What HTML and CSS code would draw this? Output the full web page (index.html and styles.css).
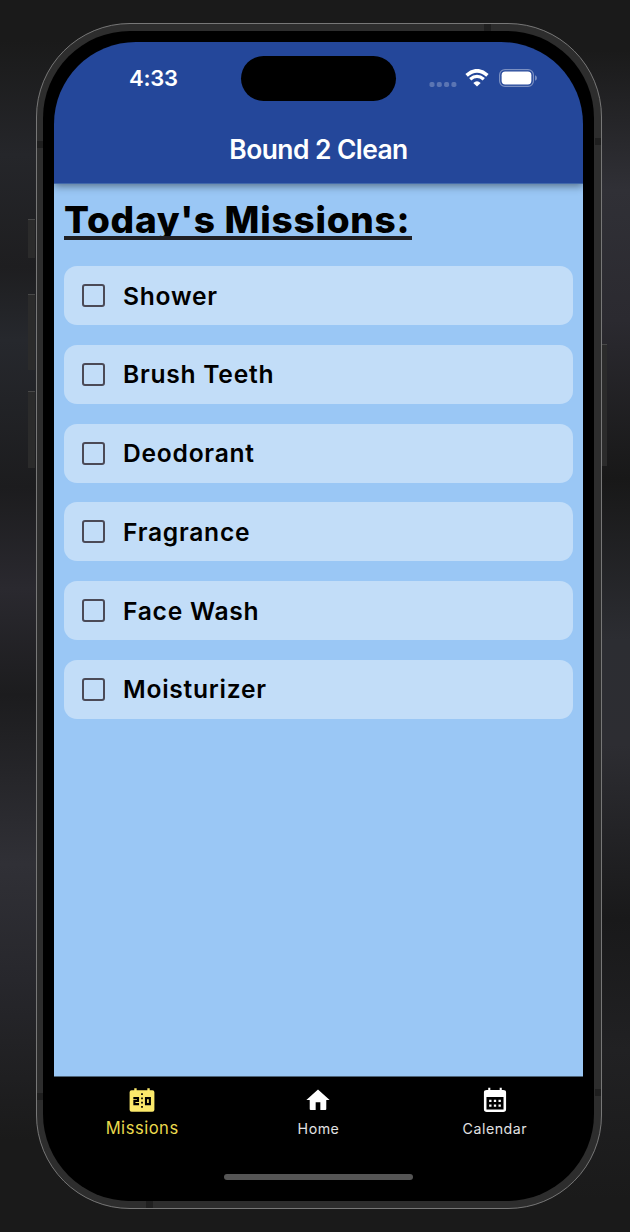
FILE: index.html
```html
<!DOCTYPE html>
<html lang="en">
<head>
  <meta charset="UTF-8">
  <title>Bound 2 Clean</title>
  <link rel="stylesheet" href="styles.css">
</head>
<body>
  <div class="phone">
    <!-- side buttons and antenna bands -->
    <span class="button action"></span>
    <span class="button vol-up"></span>
    <span class="button vol-down"></span>
    <span class="button power"></span>
    <span class="band band-top"></span>
    <span class="band band-bottom"></span>
    <span class="band band-left-top"></span>
    <span class="band band-right-top"></span>
    <span class="band band-left-bottom"></span>
    <span class="band band-right-bottom"></span>

    <div class="bezel">
      <div class="screen">
        <header class="app-bar">
          <div class="status-bar">
            <span class="time">4:33</span>
            <span class="island"></span>
            <div class="status-icons">
              <svg class="signal" width="28" height="6" viewBox="0 0 28 6" fill="#fff" fill-opacity=".25">
                <rect x=".5" y="1" width="5" height="5" rx="1.8"/>
                <rect x="7.8" y="1" width="5" height="5" rx="1.8"/>
                <rect x="15.1" y="1" width="5" height="5" rx="1.8"/>
                <rect x="22.4" y="1" width="5" height="5" rx="1.8"/>
              </svg>
              <svg class="wifi" width="24" height="18" viewBox="0 0 24 18" fill="none" stroke="#fff">
                <path d="M1.6 6.3Q12-2.7 22.4 6.3" stroke-width="3.7"/>
                <path d="M5.2 10.3Q12 4.4 18.8 10.3" stroke-width="3.3"/>
                <path d="M12 17.5L8.3 13.9Q12 10.8 15.7 13.9Z" fill="#fff" stroke="none"/>
              </svg>
              <svg class="battery" width="39" height="18" viewBox="0 0 39 18">
                <rect x=".6" y=".6" width="33.8" height="16.8" rx="5.4" fill="none" stroke="#fff" stroke-opacity=".4" stroke-width="1.2"/>
                <rect x="2.6" y="2.6" width="29.8" height="12.8" rx="3.6" fill="#fff"/>
                <path d="M36 6.2q2 .7 2 2.8t-2 2.8z" fill="#fff" fill-opacity=".4"/>
              </svg>
            </div>
          </div>
          <h1 class="app-title">Bound 2 Clean</h1>
        </header>

        <main class="content">
          <h2 class="heading">Today's Missions:</h2>
          <ul class="missions">
            <li class="mission"><span class="checkbox"></span>Shower</li>
            <li class="mission"><span class="checkbox"></span>Brush Teeth</li>
            <li class="mission"><span class="checkbox"></span>Deodorant</li>
            <li class="mission"><span class="checkbox"></span>Fragrance</li>
            <li class="mission"><span class="checkbox"></span>Face Wash</li>
            <li class="mission"><span class="checkbox"></span>Moisturizer</li>
          </ul>
        </main>

        <nav class="nav">
          <div class="nav-item active">
            <svg width="32" height="32" viewBox="0 0 24 24">
              <path fill="#fbe96b" d="M17.8 4V2.4H16V4H8V2.4H6.2V4H4.2Q2.7 4 2.7 5.5V18.500Q2.7 20 4.2 20H19.8Q21.3 20 21.3 18.5V5.5Q21.3 4 19.8 4Z"/>
              <path fill="none" stroke="#000" stroke-width="1.6" d="M5.5 9.800H9V12H6.3V14.3H9.8M15 9.8H17.9V14.3H15Z"/>
              <path fill="none" stroke="#000" stroke-width="1.3" stroke-dasharray="1.3 1.9" d="M12 6.2V18"/>
            </svg>
            <span>Missions</span>
          </div>
          <div class="nav-item">
            <svg width="28" height="28" viewBox="0 0 24 24">
              <path fill="#fff" d="M10 20.5v-6.5h4v6.500h4.300q.8 0 .8-.8V12h2.900L12 3 2 12h2.900v7.700q0 .8.800.8z"/>
            </svg>
            <span>Home</span>
          </div>
          <div class="nav-item">
            <svg width="28" height="28" viewBox="0 0 24 24">
              <path fill="#fff" fill-rule="evenodd" d="M19 3.5H17.8V1.5H16V3.5H8V1.5H6.2V3.5H5Q2.5 3.5 2.5 5.5V20Q2.5 22.3 5 22.3H19Q21.5 22.3 21.5 20V5.5Q21.5 3.5 19 3.5ZM4.7 9.5H19.3V20.2H4.7Z"/>
              <path fill="#fff" d="M7 11.8h2v2H7zM11 11.8h2v2h-2zM15 11.8h2v2h-2zM7 15.8h2v2H7zM11 15.8h2v2h-2zM15 15.8h2v2h-2z"/>
            </svg>
            <span>Calendar</span>
          </div>
        </nav>
        <div class="home-indicator"></div>
      </div>
    </div>
  </div>
</body>
</html>
```
FILE: styles.css
```css
* {
  box-sizing: border-box;
}
html, body {
  margin: 0;
  padding: 0;
  width: 630px;
  height: 1232px;
  overflow: hidden;
}
body {
  padding: 23px 0 0 36px;
  font-family: Inter, "Liberation Sans", sans-serif;
  background:
    linear-gradient(#1a1a1a 40px, #25262a 155px, #1e1e20 267px, #26282d 340px, #1c1c1e 487px, #2a292f 589px, #1c1c1e 695px, #303036 864px, #27272c 980px, #1a1a1a 1140px) left / 300px 100% no-repeat,
    linear-gradient(#1a1a1a 50px, #303036 190px, #2b2a30 320px, #181818 479px, #2c2d32 640px, #2d2d32 745px, #19191a 919px, #212123 1050px, #1a1a1a 1200px) right / 330px 100% no-repeat;
}
.phone {
  position: relative;
  width: 566px;
  height: 1186px;
  padding: 7px 7px 7px 6px;
  border: 1px solid #777;
  border-radius: 94px;
  background: #2d2d2d;
}
.bezel {
  height: 100%;
  padding: 11px 11px 0;
  border-radius: 87px;
  background: #000;
  overflow: hidden;
}
.screen {
  display: flex;
  flex-direction: column;
  height: 1159px;
  border-radius: 82px;
  overflow: hidden;
  background: #000;
}

.button {
  position: absolute;
  width: 7px;
  background: #2b2b2b;
  border-top: 1px solid #484848;
}
.action { left: -9px; top: 195px; height: 39px; }
.vol-up { left: -9px; top: 270px; height: 76px; }
.vol-down { left: -9px; top: 367px; height: 77px; }
.power { right: -6px; top: 320px; width: 5px; height: 122px; }
.band {
  position: absolute;
  background: #1f1f1f;
  width: 6px;
  height: 7px;
}
.band-top { left: 447px; top: 0; width: 7px; }
.band-bottom { left: 109px; bottom: 0; width: 7px; }
.band-left-top { left: 0; top: 117px; }
.band-right-top { right: 0; top: 114px; }
.band-left-bottom { left: 0; bottom: 108px; }
.band-right-bottom { right: 0; bottom: 112px; }

.app-bar {
  position: relative;
  z-index: 1;
  flex: none;
  height: 142px;
  color: #fff;
  background: #24479a;
  border-bottom: 1px solid #4269ab;
  box-shadow: 0 2px 8px rgba(0, 0, 0, 0.45);
}
.status-bar {
  display: flex;
  height: 73px;
  padding: 14px 45px 0 75px;
}
.time {
  width: 112px;
  padding-top: 8px;
  font-size: 22px;
  font-weight: 600;
  line-height: 28px;
  letter-spacing: -0.2px;
}
.island {
  width: 155px;
  height: 45px;
  border-radius: 23px;
  background: #000;
}
.status-icons {
  display: flex;
  align-items: center;
  height: 18px;
  margin: 13px 0 0 33px;
}
.signal { margin: 11px 8px 0 0; }
.battery { margin-left: 10px; }
.app-title {
  margin: 18px 0 0;
  font-size: 26.4px;
  font-weight: 600;
  line-height: 32px;
  letter-spacing: -0.55px;
  text-align: center;
}

.content {
  flex: none;
  height: 892px;
  padding: 15px 10px 0;
  background: #9ac7f5;
}
/* the rule sits over the descender of the "y" */
.heading {
  width: 348px;
  height: 41px;
  margin: 0 0 26px;
  border-bottom: 4px solid #202024;
  overflow: hidden;
  color: #000;
  font-size: 37px;
  font-weight: 800;
  line-height: 42px;
  letter-spacing: 0.75px;
  white-space: nowrap;
}
.missions {
  display: flex;
  flex-direction: column;
  gap: 19.8px;
  margin: 0;
  padding: 0;
  list-style: none;
}
.mission {
  display: flex;
  align-items: center;
  height: 59px;
  padding-left: 18px;
  border-radius: 13px;
  color: #000;
  background: #c2ddf8;
  font-size: 24.6px;
  font-weight: 600;
  letter-spacing: 0.75px;
}
.checkbox {
  width: 23px;
  height: 23px;
  margin-right: 18px;
  border: 2.4px solid #4b4a57;
  border-radius: 3px;
}

.nav {
  display: flex;
  height: 98px;
  border-top: 1px solid #4d6378;
}
.nav-item {
  display: flex;
  flex: 1;
  flex-direction: column;
  align-items: center;
  padding-top: 9px;
  color: #e2e2e2;
  font-size: 14.2px;
  line-height: 20px;
  letter-spacing: 0.5px;
}
.nav-item span { margin-top: 5px; }
.nav-item.active {
  padding-top: 8px;
  color: #e9d94d;
  font-size: 16.6px;
}
.nav-item.active span { margin-top: 1px; }
.home-indicator {
  width: 189px;
  height: 6px;
  margin: 0 auto;
  border-radius: 3px;
  background: #555;
}
```
